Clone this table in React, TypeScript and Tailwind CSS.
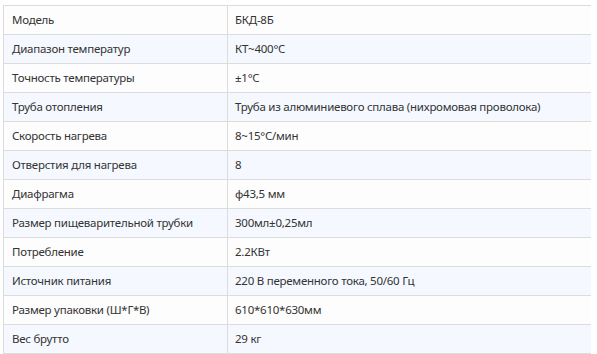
import React from "react";

const rows: [string, string][] = [
  ["Модель", "БКД-8Б"],
  ["Диапазон температур", "КТ~400°C"],
  ["Точность температуры", "±1°C"],
  ["Труба отопления", "Труба из алюминиевого сплава (нихромовая проволока)"],
  ["Скорость нагрева", "8~15°C/мин"],
  ["Отверстия для нагрева", "8"],
  ["Диафрагма", "φ43,5 мм"],
  ["Размер пищеварительной трубки", "300мл±0,25мл"],
  ["Потребление", "2.2КВт"],
  ["Источник питания", "220 В переменного тока, 50/60 Гц"],
  ["Размер упаковки (Ш*Г*В)", "610*610*630мм"],
  ["Вес брутто", "29 кг"],
];

export default function App() {
  return (
    <div className="w-[597px] h-[354px] bg-white pt-[5px] pl-[3px] overflow-hidden" style={{ fontFamily: '"Noto Sans", "Open Sans", sans-serif' }}>
      <div className="w-[588px] border-t border-l border-[#dcdcdc]">
        {rows.map(([k, v], i) => (
          <div
            key={i}
            className={`flex h-[29px] border-b border-[#dcdcdc] ${i % 2 === 1 ? "bg-[#f5f9ff]" : "bg-[#fdfdfd]"}`}
          >
            <div className="w-[224px] shrink-0 border-r border-[#dcdcdc] pl-[8px] flex items-center text-[11.5px] tracking-[-0.25px] text-[#333]">{k}</div>
            <div className="flex-1 pl-[7px] flex items-center text-[11.5px] tracking-[-0.25px] text-[#333]">{v}</div>
          </div>
        ))}
      </div>
    </div>
  );
}
